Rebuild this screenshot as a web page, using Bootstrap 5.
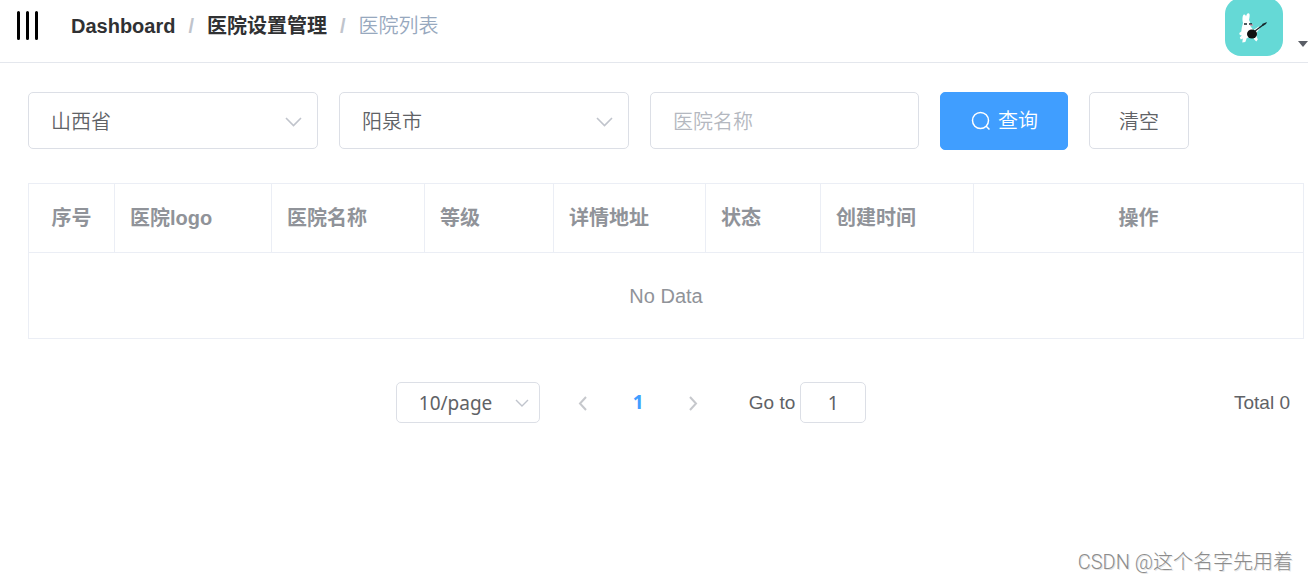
<!DOCTYPE html>
<html lang="zh-CN">
<head>
<meta charset="utf-8">
<meta name="viewport" content="width=device-width, initial-scale=1">
<title>医院列表</title>
<link href="https://cdn.jsdelivr.net/npm/bootstrap@5.3.0/dist/css/bootstrap.min.css" rel="stylesheet">
<style>
  body { font-family: "Liberation Sans", "Noto Sans CJK SC", sans-serif; font-size: 20px; line-height: 28px; color: #606266; }
  .topbar { border-bottom: 1px solid #e4e7ed; height: 63px; }
  .menu-btn { margin: 10px 0 0 15px; }
  .crumbs { margin: 12px 0 0 31px; --bs-breadcrumb-item-padding-x: 13px; --bs-breadcrumb-divider-color: #c0c4cc; --bs-breadcrumb-margin-bottom: 0; }
  .crumbs a { color: #303133; }
  .crumbs .breadcrumb-item + .breadcrumb-item::before { font-weight: 700; }
  .crumbs .active { color: #97a8be; font-weight: 350; }
  .user-menu { gap: 15px; color: #5a5e66; }
  .user-menu .caret { margin-bottom: 8px; }
  .page-main { padding: 29px 4px 0 28px; }
  .filters { gap: 21px; }
  .field { border: 1px solid #dcdfe6; border-radius: 5px; color: #606266; font-size: 20px; font-weight: 350; line-height: 28px; background-color: #fff; }
  .field::placeholder { color: #b4b8c0; opacity: 1; }
  .filters .field { height: 57px; padding: 2px 22px 0; }
  .filters input.field { padding-top: 3px; }
  .pick { appearance: none; width: 100%; }
  .pick-box { position: relative; }
  .pick-box svg { position: absolute; right: 16px; top: 50%; margin-top: -4px; pointer-events: none; }
  .region-box { flex: 0 1 290px; }
  .name-box { flex: 0 1 269px; }
  .filters .btn { --bs-btn-font-size: 20px; --bs-btn-border-radius: 5px; font-weight: 350; height: 57px; padding: 2px 29px 0; white-space: nowrap; }
  .filters .btn-query { --bs-btn-color: #fff; --bs-btn-bg: #409eff; --bs-btn-border-color: #409eff; --bs-btn-hover-color: #fff; --bs-btn-hover-bg: #66b1ff; gap: 7px; height: 58px; padding: 0 29px 0 30px; }
  .btn-clear { --bs-btn-color: #606266; --bs-btn-border-color: #dcdfe6; --bs-btn-hover-color: #409eff; --bs-btn-hover-border-color: #c6e2ff; }
  .hospital-table { --bs-table-color: #909399; --bs-table-bg: transparent; table-layout: fixed; margin: 33px 0 0; color: #909399; border-color: #ebeef5; }
  .hospital-table th { padding: 20px 15px; height: 69px; font-weight: 700; white-space: nowrap; }
  .hospital-table td { height: 86px; vertical-align: middle; text-align: center; }
  .pager { margin-top: 43px; font-size: 19px; }
  .pager .field { height: 41px; font-size: 19px; font-family: "Noto Sans", sans-serif; font-weight: 400; }
  .size-box { width: 144px; }
  .size-box .field { padding: 0 22px; }
  .size-box svg { right: 11px; }
  .pager-step { width: 55px; }
  .pager-step .current { color: #409eff; font-family: "Noto Sans", sans-serif; font-weight: 700; text-decoration: none; }
  .jump { width: 66px; text-align: center; margin-left: 5px; }
  .total { margin-right: 14px; }
  .credit { padding: 0 15px 4px; font-family: Roboto, "Noto Sans CJK SC", sans-serif; font-weight: 300; color: #8c8c8c; text-shadow: 1px 1px 0 #e4e4e4; }
</style>
</head>
<body class="d-flex flex-column min-vh-100">
<header class="topbar d-flex align-items-start">
  <button type="button" class="menu-btn btn p-0 border-0 lh-1" aria-label="菜单">
    <svg width="25" height="31" viewBox="0 0 25 31" fill="none" stroke="#000" stroke-width="3" stroke-linecap="round" class="d-block"><path d="M3.500 2.500v26M12.500 2.500v26M21.500 2.500v26"/></svg>
  </button>
  <nav aria-label="breadcrumb">
    <ol class="breadcrumb crumbs">
      <li class="breadcrumb-item"><a href="#" class="fw-bold text-decoration-none">Dashboard</a></li>
      <li class="breadcrumb-item"><a href="#" class="fw-bold text-decoration-none">医院设置管理</a></li>
      <li class="breadcrumb-item active" aria-current="page">医院列表</li>
    </ol>
  </nav>
  <button type="button" class="user-menu btn p-0 border-0 ms-auto d-flex align-items-end" aria-label="用户">
    <svg width="58" height="56" viewBox="0 2 58 56">
      <rect width="58" height="58" rx="16" fill="#65d9d6"/>
      <path fill="#fff" d="M18 25c-1-4-.5-8 1-8.500 1.300-.3 1.800 1 2 2 .5-2 1.200-3.500 2.500-3.300 1.800.3 1.200 4 .5 6.800 1 1.500 1.600 3 1.300 6l3 4 4-2.500 1-1 2 1-1 2-2 2-1 4 1.500 4-1.500 2-2-2-1.500-3-6 1.500-1.500 4-3 .5.500-4-2 1-1-2 2-2-2-.5-.5-2 2-1.500.5-4z"/>
      <path d="M19 26h3m2 0h3" stroke="#17262a" stroke-width="1.300"/>
      <path d="M25 27h3" stroke="#ef7b9b"/>
      <ellipse cx="27" cy="36" rx="5" ry="4.500" fill="#111"/>
      <path d="M30 33l8-6" stroke="#17262a" stroke-width="1.300"/>
      <path fill="#17262a" d="M37 26l5-2-1 2-3 2z"/>
    </svg>
    <svg class="caret" width="10" height="7" viewBox="0 0 10 7"><path fill="currentColor" d="M0 0h10L5 6z"/></svg>
  </button>
</header>

<main class="page-main">
  <form class="filters d-flex align-items-start">
    <div class="pick-box region-box">
      <select class="field pick" aria-label="省"><option>山西省</option></select>
      <svg width="17" height="11" viewBox="0 0 17 11" fill="none" stroke="#c0c4cc" stroke-width="1.600"><path d="M1 1l7.500 7.500L16 1"/></svg>
    </div>
    <div class="pick-box region-box">
      <select class="field pick" aria-label="市"><option>阳泉市</option></select>
      <svg width="17" height="11" viewBox="0 0 17 11" fill="none" stroke="#c0c4cc" stroke-width="1.600"><path d="M1 1l7.500 7.500L16 1"/></svg>
    </div>
    <div class="name-box"><input type="text" class="field w-100" placeholder="医院名称" aria-label="医院名称"></div>
    <button type="button" class="btn btn-query d-flex align-items-center">
      <svg width="20" height="20" viewBox="0 0 20 20" fill="none" stroke="currentColor" stroke-width="1.500"><circle cx="9.500" cy="9.500" r="8"/><path d="M15 15l3.500 3.500"/></svg>查询</button>
    <button type="button" class="btn btn-clear">清空</button>
  </form>

  <table class="table table-bordered hospital-table">
    <colgroup><col style="width:86px"><col style="width:157px"><col style="width:153px"><col style="width:129px"><col style="width:152px"><col style="width:115px"><col style="width:153px"><col></colgroup>
    <thead><tr>
      <th class="text-center px-0">序号</th><th>医院logo</th><th>医院名称</th><th>等级</th><th>详情地址</th><th>状态</th><th>创建时间</th><th class="text-center">操作</th>
    </tr></thead>
    <tbody><tr><td colspan="8">No Data</td></tr></tbody>
  </table>

  <div class="pager d-flex align-items-center">
    <div class="d-flex align-items-center mx-auto">
      <div class="pick-box size-box">
        <select class="field pick" aria-label="每页条数"><option>10/page</option></select>
        <svg width="14" height="9" viewBox="0 0 14 9" fill="none" stroke="#c0c4cc" stroke-width="1.400"><path d="M1 1l6 6 6-6"/></svg>
      </div>
      <nav class="d-flex align-items-center ms-3 me-4" aria-label="分页">
        <button type="button" class="pager-step btn p-0 border-0 lh-1" disabled aria-label="上一页"><svg width="10" height="15" viewBox="0 0 10 15" fill="none" stroke="#a8abb2" stroke-width="2"><path d="M8 1L2 7.500 8 14"/></svg></button>
        <span class="pager-step text-center"><a href="#" class="current">1</a></span>
        <button type="button" class="pager-step btn p-0 border-0 lh-1" disabled aria-label="下一页"><svg width="10" height="15" viewBox="0 0 10 15" fill="none" stroke="#a8abb2" stroke-width="2"><path d="M2 1l6 6.500L2 14"/></svg></button>
      </nav>
      <label for="jump" class="ps-1">Go to</label>
      <input id="jump" type="text" class="field jump" value="1">
    </div>
    <span class="total">Total 0</span>
  </div>
</main>

<footer class="credit mt-auto text-end">CSDN @这个名字先用着</footer>
<script src="https://cdn.jsdelivr.net/npm/bootstrap@5.3.0/dist/js/bootstrap.bundle.min.js"></script>
</body>
</html>
